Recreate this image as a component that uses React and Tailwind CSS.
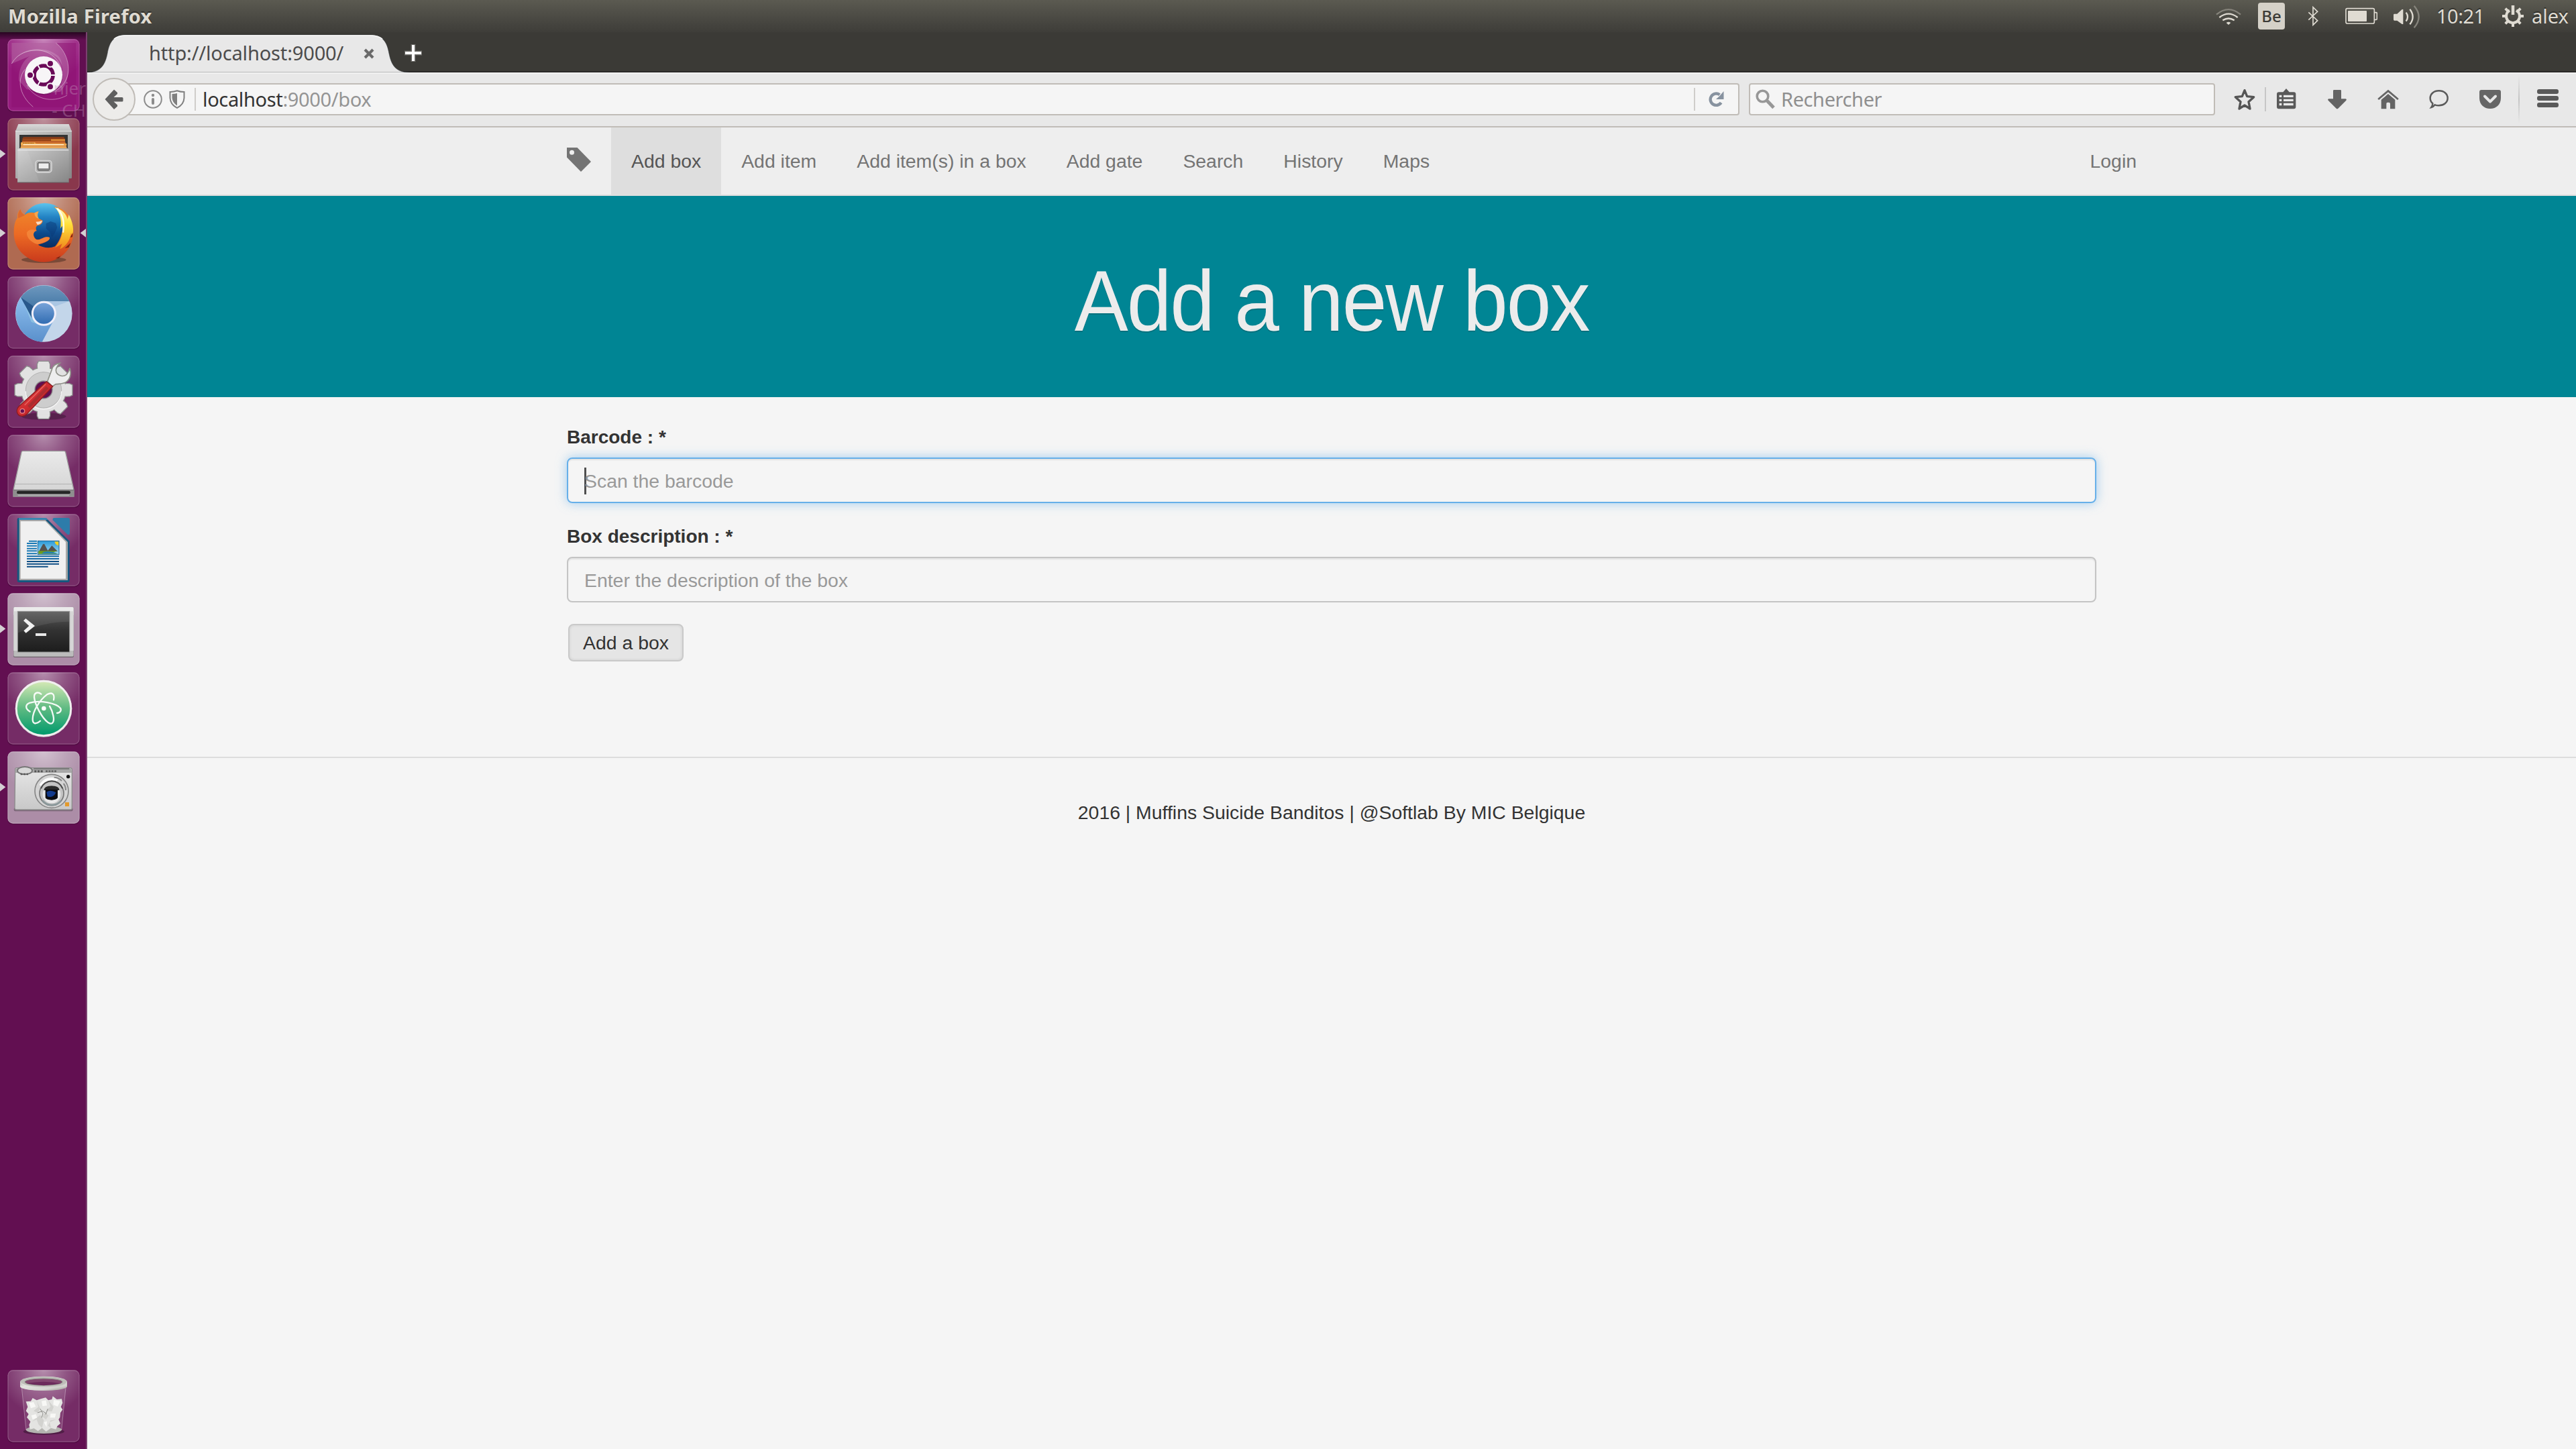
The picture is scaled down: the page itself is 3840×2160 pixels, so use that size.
import React from "react";

const UI = "font-['Noto_Sans','Open_Sans',sans-serif]";

/* ---------- launcher ---------- */

function Tile({ top, tint = "#ffffff", opacity = 0.12, arrow, focus, children }) {
  const y = top + 16;
  return (
    <svg className="block h-[118px] w-[128px] shrink-0" viewBox={`0 ${top} 384 354`}>
      <rect x="32" y={y + 3} width="326" height="324" rx="25" fill="#000" opacity="0.14" />
      <rect x="34" y={y} width="322" height="322" rx="24" fill="#620f51" />
      <rect x="34" y={y} width="322" height="322" rx="24" fill={tint} opacity={opacity} />
      <rect x="34" y={y} width="322" height="322" rx="24" fill="url(#gloss)" />
      <rect x="36" y={y + 2} width="318" height="318" rx="22" fill="none" stroke="#fff" strokeOpacity="0.16" strokeWidth="4" />
      {children}
      {arrow && <path d={`M0 ${top + 156} L25 ${top + 175} L0 ${top + 194} Z`} fill="#d3cfd2" />}
      {focus && <path d={`M384 ${top + 156} L359 ${top + 175} L384 ${top + 194} Z`} fill="#d3cfd2" />}
    </svg>
  );
}

function Defs() {
  const g = (id, stops, v = true) => (
    <linearGradient id={id} x1="0" y1="0" x2={v ? 0 : 1} y2="1">
      {stops.map(([o, c]) => (
        <stop key={o} offset={o} stopColor={c} />
      ))}
    </linearGradient>
  );
  return (
    <svg className="absolute h-0 w-0">
      <defs>
        <radialGradient id="gloss" cx="0.5" cy="0" r="0.62">
          <stop offset="0" stopColor="#fff" stopOpacity="0.46" />
          <stop offset="0.5" stopColor="#fff" stopOpacity="0.2" />
          <stop offset="1" stopColor="#fff" stopOpacity="0" />
        </radialGradient>
        {g("metal", [[0, "#f2f2f2"], [1, "#bdbdbd"]])}
        {g("cabinet", [[0, "#cfcfcf"], [1, "#868686"]], false)}
        {g("cabinetTop", [[0, "#d9d9d9"], [1, "#bdbdbd"]])}
        {g("folders", [[0, "#7a3518"], [0.45, "#c8672a"], [1, "#f0b764"]])}
        {g("globe", [[0, "#5cc4ee"], [0.3, "#2383c4"], [0.65, "#0d4a8c"], [1, "#082a5c"]])}
        {g("fox", [[0, "#f08a2c"], [0.5, "#ec6a24"], [1, "#c93a1c"]])}
        {g("tail", [[0, "#fff8c0"], [0.4, "#ffe03a"], [1, "#f08a1c"]])}
        {g("chromeTop", [[0, "#6e98be"], [1, "#336a9c"]])}
        {g("chromeLeft", [[0, "#8fc0ee"], [1, "#5a90cc"]])}
        {g("chromeMid", [[0, "#7aa5da"], [1, "#2e6ab0"]])}
        {g("handle", [[0, "#e0403a"], [0.5, "#d02c30"], [1, "#941820"]], false)}
        {g("drive", [[0, "#eaeaea"], [1, "#d2d2d2"]])}
        {g("term", [[0, "#5a5a5a"], [0.45, "#333"], [1, "#1c1c1c"]])}
        {g("atom", [[0, "#d2e8b4"], [0.5, "#5fba82"], [1, "#009a6c"]])}
        {g("camera", [[0, "#e6e6e6"], [1, "#c8c8c8"]])}
        {g("sky", [[0, "#2a9ad8"], [1, "#a8dcf4"]])}
        {g("rim", [[0, "#b4b4b0"], [0.3, "#e4e4e0"], [0.7, "#d4d4d0"], [1, "#98988f"]], false)}
      </defs>
    </svg>
  );
}

function Dash() {
  return (
    <Tile top={39} tint="#a8208e" opacity={0.75}>
      <rect x="52" y="72" width="288" height="288" fill="#8c0f70" opacity="0.5" />
      <path d="M52 165 C90 90 200 80 260 130 C290 160 285 250 230 290 L120 280 L84 240 C82 170 120 120 195 105 Z" fill="#fff" opacity="0.16" />
      <path d="M250 72 C320 130 320 240 270 290 L195 298 L278 210 C290 160 250 110 165 105 C110 105 70 130 52 165 L52 72 Z" fill="#fff" opacity="0.2" />
      <path d="M52 165 C78 118 130 100 182 106 C240 115 275 160 278 215" fill="none" stroke="#fff" strokeOpacity="0.45" strokeWidth="3" />
      <path d="M250 72 C300 112 315 180 300 225 C285 270 240 300 195 300" fill="none" stroke="#fff" strokeOpacity="0.45" strokeWidth="3" />
      <path d="M112 190 C78 230 80 300 148 358" fill="none" stroke="#fff" strokeOpacity="0.45" strokeWidth="3" />
      <path d="M120 260 C150 320 230 345 300 306" fill="none" stroke="#fff" strokeOpacity="0.4" strokeWidth="3" />
      <circle cx="196" cy="221" r="84" fill="#5a0a4c" opacity="0.45" />
      <circle cx="195" cy="216" r="84" fill="#f7f5f7" />
      <circle cx="195" cy="216" r="42" fill="none" stroke="#6a0a58" strokeWidth="17" />
      <g stroke="#f7f5f7" strokeWidth="6">
        <path d="M195 216 H255" />
        <path d="M195 216 L165 164" />
        <path d="M195 216 L165 268" />
      </g>
      <circle cx="195" cy="216" r="33" fill="#f7f5f7" />
      <g fill="#6a0a58" stroke="#f7f5f7" strokeWidth="6">
        <circle cx="135" cy="216" r="15" />
        <circle cx="225" cy="164" r="15" />
        <circle cx="225" cy="268" r="15" />
      </g>
    </Tile>
  );
}

function Files() {
  return (
    <Tile top={393} tint="#b06048" opacity={0.5} arrow>
      <rect x="69" y="462" width="252" height="216" rx="4" fill="url(#cabinet)" />
      <path d="M82 435 H308 L321 468 H69 Z" fill="url(#cabinetTop)" />
      <path d="M69 467 H321" stroke="#e6e6e6" strokeWidth="3" />
      <rect x="87" y="483" width="216" height="66" fill="#343434" />
      <path d="M104 492 H286 L300 546 H90 Z" fill="url(#folders)" />
      <path d="M100 500 H290 M98 508 H230" stroke="#8c3c14" strokeWidth="4" />
      <path d="M228 503 H291 V509 H228 Z" fill="#e89838" />
      <path d="M93 517 H156 L162 522 H298 V530 H93 Z" fill="#eeaa50" />
      <path d="M104 520 H152" stroke="#8c4a10" strokeWidth="3" strokeDasharray="4 3" />
      <path d="M104 527 H285" stroke="#fff4dc" strokeWidth="4" />
      <path d="M82 543 H304 L308 550 V696 H78 V550 Z" fill="url(#cabinet)" />
      <path d="M79 551 H307" stroke="#e8e8e8" strokeWidth="4" />
      <path d="M122 552 H80 V694 H176 Z" fill="#fff" opacity="0.08" />
      <path d="M78 696 H308" stroke="#666" strokeWidth="3" />
      <rect x="159" y="598" width="72" height="53" rx="12" fill="#b4b4b4" stroke="#dadada" strokeWidth="4" />
      <rect x="169" y="607" width="52" height="35" rx="5" fill="#8a8a8a" stroke="#555" strokeWidth="3" />
      <rect x="173" y="611" width="44" height="22" fill="#ededed" />
    </Tile>
  );
}

function Firefox() {
  return (
    <Tile top={27} tint="#d89a52" opacity={0.66} arrow focus>
      <ellipse cx="196" cy="322" rx="100" ry="14" fill="#000" opacity="0.3" />
      <circle cx="200" cy="172" r="104" fill="url(#globe)" />
      <path d="M206 160 L226 150 L250 158 L256 178 L244 204 L232 222 L222 196 L206 182 Z" fill="#0a3a78" opacity="0.5" />
      <path d="M240 84 C298 88 334 150 328 206 C322 282 262 332 196 332 C120 332 62 274 62 204 C62 170 66 150 78 134 C76 118 82 104 92 96 C94 108 102 116 112 120 C124 110 140 108 156 112 C160 108 166 106 173 106 C166 116 166 126 170 136 L191 146 C191 156 184 166 170 168 C158 172 160 184 164 192 C146 194 146 218 162 230 C184 236 196 212 222 222 C224 232 212 240 196 246 C186 250 178 252 170 254 C190 268 222 272 246 262 C270 234 280 200 282 164 C282 132 268 106 240 84 Z" fill="url(#fox)" />
      <path d="M160 152 Q176 152 188 146 Q190 158 168 166 Z" fill="#f8dcc4" />
      <path d="M154 112 C162 108 168 106 173 106 C166 118 168 130 174 138 C160 136 154 124 154 112 Z" fill="#f6a64c" />
      <path d="M92 96 C94 110 102 118 112 122 L82 136 C78 118 84 104 92 96 Z" fill="#dc6a30" />
      <path d="M120 200 C126 188 142 182 164 192 C146 194 144 220 162 232 C184 238 196 212 222 222 C224 236 200 244 168 252 C138 244 118 222 120 200 Z" fill="#f58a3c" opacity="0.8" />
      <path d="M246 88 C278 98 296 116 302 140 L308 120 C324 150 334 190 322 216 L318 200 C314 236 294 262 268 274 L278 250 L246 268 C272 236 284 200 278 170 L270 182 C276 140 268 112 246 88 Z" fill="url(#tail)" />
      <path d="M256 92 C280 116 290 150 282 200" stroke="#fff" strokeWidth="7" fill="none" opacity="0.85" />
      <path d="M290 270 L316 246 L308 266 Z M248 316 L272 304 L262 316 Z M314 222 L326 200 L324 220 Z" fill="#7a2412" />
    </Tile>
  );
}

function Chromium() {
  return (
    <Tile top={381}>
      <circle cx="196" cy="562" r="127" fill="#c3d6ea" />
      <path d="M93 490 A127 127 0 0 1 310 507 H196 L140 575 Z" fill="url(#chromeTop)" />
      <path d="M93 490 A127 127 0 0 0 188 689 L236 600 L142 578 Z" fill="url(#chromeLeft)" />
      <path d="M93 490 L142 582 L150 530 Z" fill="#28588c" />
      <path d="M108 518 L142 582 L170 610 L140 600 Z" fill="#a4d8e8" opacity="0.5" />
      <path d="M215 507 H310 L246 530 Z" fill="#9fbfe0" opacity="0.7" />
      <circle cx="196" cy="562" r="51" fill="url(#chromeMid)" stroke="#f0effa" strokeWidth="9" />
    </Tile>
  );
}

function Settings() {
  const teeth = [0, 45, 90, 135, 180, 225, 270, 315];
  return (
    <Tile top={735}>
      <ellipse cx="196" cy="1022" rx="100" ry="16" fill="#000" opacity="0.25" />
      <g fill="#e2e2e2" stroke="#8c8c8c" strokeWidth="4">
        {teeth.map((a) => (
          <path key={a} d="M166 822 V788 L172 775 H218 L224 788 V822 Z" transform={`rotate(${a} 195 904)`} />
        ))}
        <circle cx="195" cy="904" r="101" />
      </g>
      <g fill="#e2e2e2">
        {teeth.map((a) => (
          <rect key={a} x="169" y="796" width="53" height="30" transform={`rotate(${a} 195 904)`} />
        ))}
      </g>
      <circle cx="195" cy="904" r="80" fill="#cdcdcd" stroke="#b2b2b2" strokeWidth="3" />
      <path d="M115 910 A80 80 0 0 0 275 910" fill="none" stroke="#f4f4f4" strokeWidth="4" />
      <circle cx="195" cy="903" r="39" fill="#620f51" stroke="#8a8a8a" strokeWidth="4" />
      <path d="M212 866 L232 812 C236 796 250 786 268 784 C256 796 246 812 252 826 C262 842 284 846 296 836 C304 828 310 816 312 806 C320 832 314 856 296 868 C282 878 262 876 250 878 L234 888 Z" fill="#eeeeee" stroke="#8f9088" strokeWidth="5" />
      <path d="M208 866 L236 888 L120 1012 C108 1024 88 1024 80 1012 C72 1002 76 986 84 978 Z" fill="url(#handle)" stroke="#8c1c20" strokeWidth="4" />
      <path d="M204 878 L110 972" stroke="#f07870" strokeWidth="5" opacity="0.7" />
      <path d="M212 892 L128 980" stroke="#8e3030" strokeWidth="14" opacity="0.55" />
      <circle cx="100" cy="998" r="10" fill="#620f51" stroke="#e88080" strokeWidth="4" />
    </Tile>
  );
}

function Drive() {
  return (
    <Tile top={1089}>
      <path d="M102 1177 H286 Q291 1177 293 1182 L330 1350 V1380 H60 V1350 L96 1182 Q98 1177 102 1177 Z" fill="url(#drive)" stroke="#9a9a9a" strokeWidth="4" />
      <path d="M67 1325 H324" stroke="#b0b0b0" strokeWidth="3" />
      <path d="M59 1351 H331 V1379 H59 Z" fill="#8e8e8e" />
      <path d="M59 1351 H331" stroke="#6c6c6c" strokeWidth="3" />
      <rect x="75" y="1355" width="240" height="14" rx="7" fill="#262626" />
      <path d="M80 1374 H310" stroke="#b8b8b8" strokeWidth="4" />
    </Tile>
  );
}

function Writer() {
  return (
    <Tile top={33}>
      <path d="M84 66 H206 L311 170 V347 Q311 354 304 354 H84 Q77 354 77 347 V73 Q77 66 84 66 Z" fill="#15587f" />
      <path d="M84 66 H206 L215 75 H84 Z" fill="#3a86b0" />
      <path d="M86 75 H203 L303 174 V345 H86 Z" fill="#a8a8a8" />
      <path d="M92 81 H203 L294 174 V338 H92 Z" fill="#f0f0f0" />
      <path d="M242 66 H304 Q312 66 312 74 V134 Q310 146 300 139 L236 76 Q234 67 242 66 Z" fill="#2d7caa" />
      <g stroke="#1878b4" strokeWidth="6">
        <path d="M129 170 H165 M120 180 H165 M120 191 H165 M120 203 H165 M120 214 H165 M120 226 H165" />
        <path d="M120 238 H264 M120 249 H264" stroke="#1468a4" />
        <path d="M120 261 H264 M120 272 H264 M120 284 H215" stroke="#0e4e84" />
      </g>
      <rect x="169" y="169" width="95" height="61" fill="url(#sky)" stroke="#106098" strokeWidth="3" />
      <path d="M244 172 H262 V190 Q248 188 244 172 Z" fill="#f6d020" />
      <path d="M174 216 L192 184 L198 182 L214 212 L232 190 L258 216 Z" fill="#55524f" />
      <path d="M172 214 H258 L230 222 L262 227 H172 Z" fill="#6c9c1c" />
      <path d="M196 218 Q226 212 258 226 H186 Z" fill="#2280b4" />
    </Tile>
  );
}

function Terminal() {
  return (
    <Tile top={387} tint="#d0cad0" opacity={0.68} arrow>
      <rect x="60" y="466" width="270" height="224" rx="6" fill="#5c585c" opacity="0.8" />
      <rect x="61" y="465" width="268" height="221" rx="5" fill="#bcbcbc" />
      <path d="M61 500 V470 Q61 465 66 465 H324 Q329 465 329 470 V500 Z" fill="#ebebeb" />
      <path d="M61 484 H80 V660 H61 Z M312 484 H329 V660 H312 Z" fill="#d6d6d6" />
      <rect x="79" y="484" width="232" height="182" fill="url(#term)" stroke="#8e8e8e" strokeWidth="3" />
      <path d="M81 486 H309 V530 Q200 530 81 580 Z" fill="#fff" opacity="0.08" />
      <path d="M105 526 L115 516 L156 549 L116 581 L106 571 L130 549 Z" fill="#f2f2f2" />
      <rect x="159" y="582" width="48" height="12" fill="#e8e8e8" />
    </Tile>
  );
}

function Atom() {
  return (
    <Tile top={741}>
      <circle cx="195" cy="919" r="127" fill="#dcdcdc" />
      <circle cx="195" cy="917" r="126" fill="#f1efef" />
      <circle cx="195" cy="918" r="118" fill="url(#atom)" />
      <g fill="none" stroke="#fff" strokeWidth="7" strokeLinecap="round" opacity="0.93">
        <path d="M134 932 C112 920 112 900 134 893 C178 880 252 894 271 918 C276 930 266 938 255 939" />
        <path d="M184 854 C172 844 152 844 153 868 C156 900 186 960 216 982 C236 994 244 976 238 950 C234 932 228 918 222 908" />
        <path d="M240 880 C246 852 232 844 210 856 C178 880 146 930 146 966 C146 986 158 992 180 974" />
      </g>
      <circle cx="196" cy="918" r="10" fill="#fff" />
    </Tile>
  );
}

function Camera() {
  return (
    <Tile top={1095} tint="#d0cad0" opacity={0.68} arrow>
      <rect x="62" y="1362" width="264" height="16" rx="8" fill="#000" opacity="0.28" />
      <path d="M68 1190 Q68 1184 76 1184 H312 Q322 1184 322 1192 V1364 Q322 1371 314 1371 H74 Q66 1371 66 1364 Z" fill="url(#camera)" stroke="#8c8c8c" strokeWidth="4" />
      <path d="M70 1186 H318 L322 1206 H68 Z" fill="#a8a8a8" />
      <path d="M150 1188 H310" stroke="#6a6a6a" strokeWidth="4" />
      <path d="M154 1199 H196" stroke="#555" strokeWidth="9" strokeDasharray="9 5" />
      <path d="M204 1199 H252" stroke="#666" strokeWidth="8" strokeDasharray="9 4" />
      <ellipse cx="111" cy="1196" rx="33" ry="17" fill="#d8d8d8" stroke="#777" strokeWidth="6" />
      <path d="M92 1212 H126" stroke="#555" strokeWidth="7" strokeDasharray="9 4" />
      <circle cx="231" cy="1288" r="75" fill="#d4d4d4" stroke="#868686" strokeWidth="5" />
      <path d="M176 1260 A62 62 0 0 1 260 1234 L250 1252 A46 46 0 0 0 190 1270 Z" fill="#fafafa" />
      <circle cx="231" cy="1298" r="54" fill="#c4c4c4" stroke="#777" strokeWidth="5" />
      <path d="M190 1330 A54 54 0 0 0 274 1330" stroke="#8a989a" strokeWidth="8" fill="none" />
      <path d="M183 1276 A52 52 0 0 1 280 1276" stroke="#4c4c4c" strokeWidth="6" fill="none" />
      <path d="M242 1226 Q264 1228 276 1242 M284 1254 Q294 1266 294 1284" stroke="#888" strokeWidth="6" fill="none" />
      <circle cx="231" cy="1302" r="40" fill="#e8e8e8" />
      <path d="M196 1284 Q198 1264 231 1264 Q264 1264 266 1284 Z" fill="#2a2a2a" />
      <path d="M203 1281 H258 V1318 Q250 1328 231 1328 Q210 1328 203 1318 Z" fill="#0c0c12" />
      <path d="M208 1292 Q226 1280 250 1294 Q240 1320 212 1312 Z" fill="#123a8c" />
      <circle cx="305" cy="1223" r="8" fill="#111" />
      <rect x="291" y="1338" width="18" height="18" fill="#e39a2c" />
    </Tile>
  );
}

function Trash() {
  return (
    <Tile top={51}>
      <ellipse cx="196" cy="342" rx="92" ry="15" fill="#000" opacity="0.3" />
      <path d="M97 140 L118 338 Q195 362 274 338 L294 140 Z" fill="#fff" opacity="0.09" />
      <ellipse cx="196" cy="334" rx="80" ry="17" fill="#b4b4b0" />
      <path d="M97 145 L117 336 M294 145 L275 336" stroke="#fff" strokeOpacity="0.35" strokeWidth="3" />
      <path d="M116 208 L138 206 L146 192 L164 202 L182 196 L204 190 L216 202 L232 198 L236 184 L254 198 L276 196 L280 214 L272 232 L280 244 L270 258 L268 278 L262 288 L270 306 L256 318 L250 332 L228 326 L206 342 L188 326 L170 340 L152 328 L134 332 L130 312 L136 298 L120 278 L128 264 L116 250 L124 232 Z" fill="#e4e4e2" />
      <g fill="#d2d2cf">
        <path d="M164 202 L172 232 L150 250 L168 258 L180 240 Z" />
        <path d="M216 202 L226 230 L206 250 L232 252 L240 232 Z" />
        <path d="M142 298 L164 288 L172 310 L188 326 L196 292 L180 268 Z" />
        <path d="M252 288 L226 292 L214 316 L228 326 L222 300 Z" />
        <path d="M200 258 L218 270 L206 288 L190 276 Z" />
      </g>
      <g fill="#f8f8f6">
        <path d="M130 214 L150 210 L160 230 L138 238 Z M240 200 L270 206 L258 230 L238 222 Z M186 206 L206 202 L210 226 L190 228 Z" />
        <path d="M140 270 L160 264 L166 280 L146 288 Z M226 262 L250 262 L246 280 L224 280 Z M196 300 L210 296 L208 322 Z" />
      </g>
      <path d="M168 258 L190 250 L208 262 M180 240 L192 262 L186 280 M214 240 L204 266" fill="none" stroke="#8e8e8a" strokeWidth="3" />
      <path d="M90 120 A105 25 0 0 1 300 120 V140 A105 19 0 0 1 90 140 Z" fill="url(#rim)" />
      <ellipse cx="195" cy="119" rx="103" ry="23" fill="#bdbdb8" />
      <path d="M91 120 A104 27 0 0 0 299 120 V141 A104 17 0 0 1 91 141 Z" fill="url(#rim)" />
      <ellipse cx="195" cy="120" rx="84" ry="15" fill="#82466f" stroke="#8a8a84" strokeWidth="3" />
      <path d="M118 127 Q195 112 272 127 Q195 144 118 127 Z" fill="#6c2a5c" />
    </Tile>
  );
}

function Launcher() {
  return (
    <aside className="relative flex w-[130px] shrink-0 flex-col border-r-2 border-[#7b4170] bg-[#620f51] pt-[5px]">
      <Defs />
      <div className="absolute inset-x-0 top-0 h-3 bg-gradient-to-b from-black/60 to-transparent" />
      <div className="relative flex flex-1 flex-col">
        <Dash />
        <Files />
        <Firefox />
        <Chromium />
        <Settings />
        <Drive />
        <Writer />
        <Terminal />
        <Atom />
        <Camera />
      </div>
      <Trash />
      <div className={`${UI} absolute right-0 top-[67px] whitespace-pre text-right text-[26px] leading-[33px] text-[#c090b8]/40`}>
        <div>nier</div>
        <div>- CH</div>
      </div>
      <div className="h-[5px] shrink-0" />
    </aside>
  );
}

/* ---------- top panel ---------- */

function Panel() {
  return (
    <header className={`${UI} flex h-12 shrink-0 items-center bg-gradient-to-b from-[#5b5a51] to-[#3e3d39] text-[29px] leading-[48px] text-[#dfdbd2] [text-shadow:0_-2px_1px_rgba(0,0,0,0.4)]`}>
      <span className="flex-1 pl-[12px] font-bold tracking-[0.3px]">Mozilla Firefox</span>
      <svg className="h-12 w-10" viewBox="36 0 120 144" fill="none" stroke="#dfdbd2" strokeWidth="7">
        <path d="M42 65 Q96 20 150 65" stroke="#85837b" />
        <path d="M55 78 Q96 46 137 78" />
        <path d="M70 91 Q96 74 122 91" />
        <path d="M86 102 Q96 94 106 102 L96 111 Z" fill="#dfdbd2" stroke="none" />
      </svg>
      <span className="ml-6 h-10 w-10 rounded-[4px] bg-[#d5d1c8] text-center text-[24px] font-medium leading-[40px] text-[#3c3b37] [text-shadow:none]">
        Be
      </span>
      <svg className="ml-[30px] h-12 w-6" viewBox="438 0 72 144" fill="none" stroke="#dfdbd2" strokeWidth="5">
        <path d="M454 55 L494 92 L474 112 V32 L494 52 L454 89" />
      </svg>
      <svg className="ml-9 h-12 w-12" viewBox="618 0 144 144">
        <rect x="621" y="38" width="127" height="67" rx="6" fill="none" stroke="#dfdbd2" strokeWidth="5" />
        <rect x="630" y="48" width="84" height="48" rx="2" fill="#dfdbd2" />
        <path d="M750 56 H756 Q760 56 760 60 V84 Q760 88 756 88 H750" fill="none" stroke="#dfdbd2" strokeWidth="5" />
      </svg>
      <svg className="ml-6 h-12 w-10" viewBox="834 0 120 144" fill="none" strokeWidth="7">
        <path d="M834 66 Q834 62 838 62 H850 L872 42 H877 V108 H872 L850 92 H838 Q834 92 834 88 Z" fill="#dfdbd2" />
        <path d="M890 56 Q904 75 890 95" stroke="#dfdbd2" />
        <path d="M907 41 Q933 75 907 109" stroke="#dfdbd2" />
        <path d="M926 26 Q968 75 926 124" stroke="#85837b" />
      </svg>
      <span className="ml-6 w-[98px] tracking-[-0.5px]">10:21</span>
      <svg className="h-8 w-8" viewBox="0 0 32 32" fill="none" stroke="#dfdbd2">
        <path d="M11 7.5 A10 10 0 1 0 21 7.5" strokeWidth="4" />
        <path d="M16 0 V14" strokeWidth="4.5" />
        <path d="M16 26 V32 M0 16 H6 M26 16 H32 M4.7 27.3 L9 23 M27.3 27.3 L23 23 M4.7 4.7 L9 9 M27.3 4.7 L23 9" strokeWidth="4" />
      </svg>
      <span className="ml-3 w-[66px]">alex</span>
    </header>
  );
}

/* ---------- browser chrome ---------- */

function TabStrip() {
  return (
    <div className={`${UI} flex h-[60px] shrink-0 bg-[#3b3a36] shadow-[inset_0_-2px_0_#2a2927]`}>
      <div className="relative flex h-[60px] w-[480px] items-center text-[29px] text-[#4c4c4c]">
        <svg className="absolute inset-0 h-[60px] w-[480px]" viewBox="0 0 480 60">
          <path d="M0 60 C22 60 27 46 30 32 C33 14 40 4 58 4 H422 C440 4 447 14 450 32 C453 46 458 60 480 60 Z" fill="#e8e8e8" stroke="#2a2f33" strokeOpacity="0.5" strokeWidth="1" />
          <path d="M40 10 Q46 5 58 5 H422 Q434 5 440 10" fill="none" stroke="#f8f8f8" strokeWidth="1.5" />
        </svg>
        <span className="relative ml-[92px] w-[320px] pt-[2px] tracking-[-0.15px]">http://localhost:9000/</span>
        <svg className="relative mt-1 h-4 w-4" viewBox="0 0 16 16">
          <path d="M2 2 L14 14 M14 2 L2 14" stroke="#6a6a6a" strokeWidth="4.2" />
        </svg>
      </div>
      <svg className="ml-[-8px] mt-[17px] h-7 w-7" viewBox="0 0 28 28">
        <path d="M14 1 V27 M1 14 H27" stroke="#6b6a66" strokeWidth="7" />
        <path d="M14 2 V26 M2 14 H26" stroke="#ffffff" strokeWidth="4" />
      </svg>
    </div>
  );
}

function Toolbar() {
  return (
    <div className={`${UI} flex h-[82px] shrink-0 items-start border-b-2 border-[#c0bcb7] bg-[#e8e8e8] text-[29px] shadow-[inset_0_2px_0_#f1f1f1]`}>
      <div className="relative z-10 ml-2 mt-2 flex h-16 w-16 items-center justify-center rounded-full border-2 border-[#c0bcb7] bg-[#edecea]">
        <svg className="h-8 w-7" viewBox="0 0 28 32">
          <path d="M0.5 16 L14 1.5 L19 6 V8 L13.5 13 H26 Q27.5 13 27.5 14.5 V18 Q27.5 19.5 26 19.5 H13.5 L19 24.5 V26.5 L14 31 Z" fill="#5f5f5f" />
        </svg>
      </div>
      <div className="ml-[-15px] mt-4 flex h-12 w-[2406px] items-center rounded-r-[4px] border-2 border-[#c0bcb7] bg-[#f5f5f5]">
        <svg className="ml-[25px] h-7 w-7 shrink-0" viewBox="0 0 28 28">
          <circle cx="14" cy="14" r="12.8" fill="none" stroke="#8c8c8c" strokeWidth="2" />
          <circle cx="14" cy="8" r="2.2" fill="#8c8c8c" />
          <rect x="12" y="12" width="4" height="10" rx="2" fill="#8c8c8c" />
        </svg>
        <svg className="ml-[10px] h-7 w-6 shrink-0" viewBox="0 0 24 28">
          <path d="M1.5 3 Q7 3 12 1.2 Q17 3 22.5 3 V12 Q22 22 12 26.8 Q2 22 1.5 12 Z" fill="none" stroke="#808080" strokeWidth="2" />
          <path d="M4.5 6 Q9 6 12 5 V23.5 Q5 19 4.5 12 Z" fill="#808080" />
        </svg>
        <div className="ml-[14px] h-[34px] w-[2px] bg-[#cfcdca]" />
        <span className="ml-[10px] flex-1 tracking-[-0.35px] text-[#949494]">
          <span className="text-[#333]">localhost</span>:9000/box
        </span>
        <div className="h-[34px] w-[2px] bg-[#cfcdca]" />
        <svg className="ml-[20px] mr-[21px] h-6 w-[23px] shrink-0" viewBox="0 0 23 24">
          <path d="M18.6 17 A8.7 8.7 0 1 1 16.5 5.2" fill="none" stroke="#87929f" strokeWidth="4.4" />
          <path d="M22.5 0 V12 H11 Q17 7 22.5 0 Z" fill="#87929f" />
        </svg>
      </div>
      <div className="ml-[14px] mt-4 flex h-12 w-[695px] items-center rounded-[4px] border-2 border-[#c0bcb7] bg-[#f5f5f5]">
        <svg className="ml-2 h-[30px] w-[30px]" viewBox="0 0 30 30" fill="none" stroke="#979797">
          <circle cx="10.5" cy="10.5" r="8.3" strokeWidth="3.6" />
          <path d="M17 17 L27 27.5" strokeWidth="5" />
        </svg>
        <span className="ml-[8px] tracking-[-0.4px] text-[#8f8f8f]">Rechercher</span>
      </div>
      <div className="flex h-20 items-center">
        <svg className="ml-7 h-8 w-8" viewBox="120 396 96 96">
          <path d="M168 404 L179 431 L209 434 L186 455 L192 486 L168 471 L144 486 L150 455 L127 434 L157 431 Z" fill="none" stroke="#555" strokeWidth="10" strokeLinejoin="round" />
        </svg>
        <div className="ml-[14px] h-9 w-[2px] bg-[#c6c6c6]" />
        <svg className="ml-[14px] h-8 w-8" viewBox="306 396 96 96">
          <path d="M354 396 L368 412 H388 Q397 412 397 421 V478 Q397 487 388 487 H321 Q312 487 312 478 V421 Q312 412 321 412 H340 Z" fill="#595959" />
          <path d="M323 425 H334 V435 H323 Z M342 425 H386 V435 H342 Z M323 443 H334 V453 H323 Z M342 443 H386 V453 H342 Z M323 461 H334 V472 H323 Z M342 461 H386 V472 H342 Z" fill="#e8e8e8" />
        </svg>
        <svg className="ml-11 h-8 w-8" viewBox="534 396 96 96">
          <path d="M568 402 H596 Q600 402 600 406 V442 H620 Q626 444 622 449 L586 485 Q582 489 578 485 L542 449 Q538 444 544 442 H564 V406 Q564 402 568 402 Z" fill="#636363" />
        </svg>
        <svg className="ml-11 h-8 w-8" viewBox="762 396 96 96">
          <path d="M764 441 L810 402 L856 441 L852 446 L810 411 L768 446 Z" fill="#636363" stroke="#636363" strokeWidth="2" />
          <path d="M779 446 L810 420 L841 446 V487 H819 V464 Q819 458 813 458 H807 Q802 458 802 464 V487 H779 Z" fill="#636363" />
        </svg>
        <svg className="ml-[43px] h-8 w-8" viewBox="987 396 96 96">
          <path d="M1037 406 C1060 406 1076 420 1076 439 C1076 459 1058 472 1037 472 C1030 472 1024 471 1019 469 Q1012 478 1003 480 Q1009 472 1009 463 Q998 454 998 439 C998 420 1014 406 1037 406 Z" fill="none" stroke="#5a5a5a" strokeWidth="7.5" />
        </svg>
        <svg className="ml-[45px] h-8 w-8" viewBox="0 0 32 32">
          <path d="M3 2 H29 Q32 2 32 5 V14 C32 24 25 30 16 30 C7 30 0 24 0 14 V5 Q0 2 3 2 Z" fill="#666" />
          <path d="M8 11.5 L16 19.5 L24 11.5" fill="none" stroke="#e8e8e8" strokeWidth="4" strokeLinecap="round" strokeLinejoin="round" />
        </svg>
        <div className="ml-[26px] h-[72px] w-[2px] bg-gradient-to-b from-transparent via-[#c4c4c4] to-transparent" />
        <div className="mb-[3px] ml-[26px] flex w-8 flex-col gap-[3px]">
          <div className="h-[7px] rounded-[3px] bg-[#595959]" />
          <div className="h-[7px] rounded-[3px] bg-[#595959]" />
          <div className="h-[7px] rounded-[3px] bg-[#595959]" />
        </div>
      </div>
    </div>
  );
}

/* ---------- page ---------- */

const links = ["Add item", "Add item(s) in a box", "Add gate", "Search", "History", "Maps"];

function Navbar() {
  return (
    <nav className="flex h-[102px] shrink-0 border-b-2 border-[#dedede] bg-[#eeeeee] pl-[715px] pr-[655px] leading-[101px] text-[#747474]">
      <svg className="mr-[30px] mt-[29px] h-[38px] w-9" viewBox="0 0 36 38">
        <path fillRule="evenodd" d="M0 1 H15.5 L36 22 L21 37 L0 15.5 Z M7.5 4.8 A3.5 3.5 0 1 0 7.5 11.8 A3.5 3.5 0 1 0 7.5 4.8 Z" fill="#747474" />
      </svg>
      <a className="h-[102px] bg-[#dedede] px-[30px] text-[#555]">Add box</a>
      {links.map((l) => (
        <a key={l} className="px-[30px]">
          {l}
        </a>
      ))}
      <a className="ml-auto">Login</a>
    </nav>
  );
}

function Field({ label, placeholder, focused }) {
  return (
    <div className="mb-[30px]">
      <label className="mb-[10px] block text-[28px] font-bold">{label}</label>
      <div
        className={
          focused
            ? "flex h-[68px] items-center rounded-lg border-2 border-[#66afe9] pl-6 pt-[2px] text-[#999] shadow-[inset_0_2px_2px_rgba(0,0,0,0.075),0_0_16px_rgba(102,175,233,0.6)]"
            : "flex h-[68px] items-center rounded-lg border-2 border-[#c4c4c4] pl-6 pt-[2px] text-[#999] shadow-[inset_0_2px_2px_rgba(0,0,0,0.075)]"
        }
      >
        {focused && <span className="mr-[-3px] h-10 w-[3px] bg-[#505050]" />}
        <span>{placeholder}</span>
      </div>
    </div>
  );
}

export default function App() {
  return (
    <div className="flex h-[2160px] w-[3840px] flex-col overflow-hidden bg-[#f5f5f5]">
      <Panel />
      <div className="flex min-h-0 flex-1">
        <Launcher />
        <div className="flex min-w-0 flex-1 flex-col">
          <TabStrip />
          <Toolbar />
          <main className="flex flex-1 flex-col font-['Liberation_Sans',Arial,sans-serif] text-[28.4px] leading-[40px] text-[#333]">
            <Navbar />
            <section className="flex h-[300px] shrink-0 items-center justify-center bg-[#008594] pt-[17px]">
              <h1 className="origin-[50%_108px] scale-y-[1.06] text-[120px] leading-[132px] tracking-[-2.1px] text-[#ececec] [text-shadow:0_2px_0_rgba(0,0,0,0.15)]">Add a new box</h1>
            </section>
            <form className="mx-auto w-[2280px] pt-10">
              <Field label="Barcode : *" placeholder="Scan the barcode" focused />
              <Field label="Box description : *" placeholder="Enter the description of the box" />
              <button type="button" className="ml-[2px] mt-8 block h-14 w-[172px] rounded-lg border-2 border-[#c9c9c9] bg-[#e5e5e5] text-center leading-[52px] shadow-[inset_0_0_4px_rgba(0,0,0,0.1)]">
                Add a box
              </button>
            </form>
            <footer className="mt-[142px] border-t-2 border-[#dddddd] pt-[61px] text-center">
              2016 | Muffins Suicide Banditos | @Softlab By MIC Belgique
            </footer>
          </main>
        </div>
      </div>
    </div>
  );
}
